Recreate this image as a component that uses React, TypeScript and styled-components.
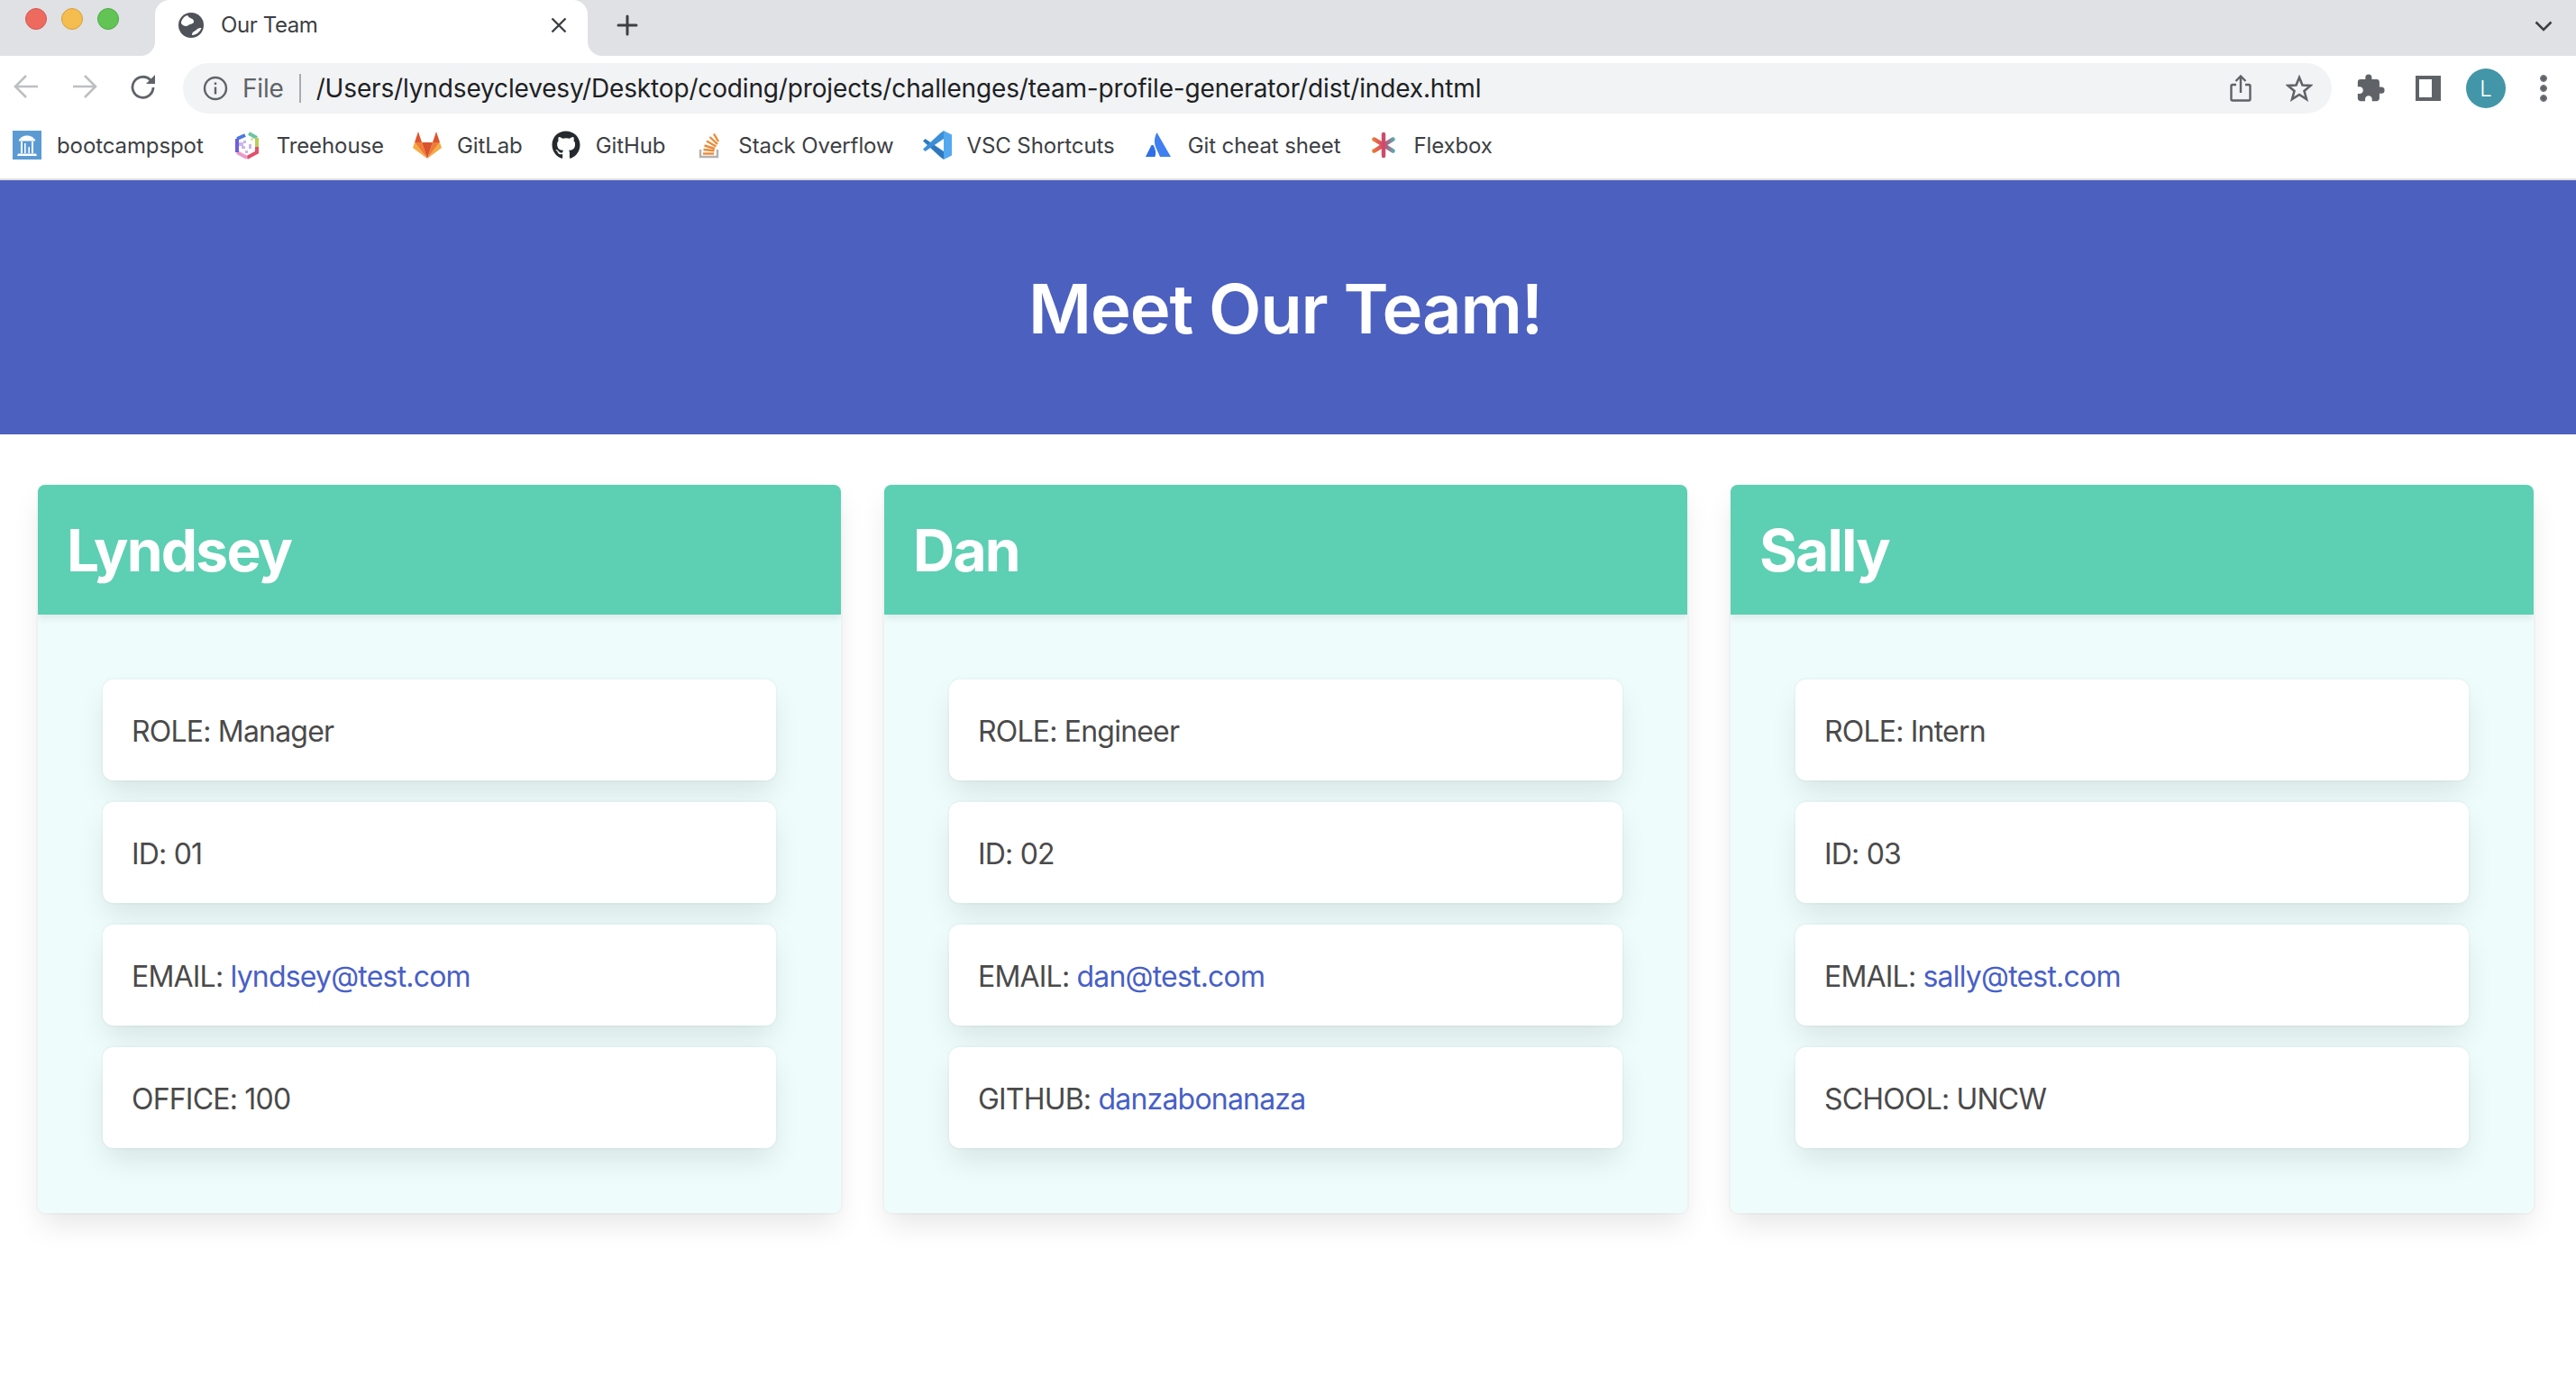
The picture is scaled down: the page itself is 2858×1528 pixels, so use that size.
import React from 'react'
import styled, { createGlobalStyle } from 'styled-components'
import { MdExtension } from 'react-icons/md'
import { FaGithub } from 'react-icons/fa'

const team = [
  {
    name: 'Lyndsey',
    rows: [
      { label: 'ROLE: Manager' },
      { label: 'ID: 01' },
      { label: 'EMAIL: ', link: 'lyndsey@test.com' },
      { label: 'OFFICE: 100' },
    ],
  },
  {
    name: 'Dan',
    rows: [
      { label: 'ROLE: Engineer' },
      { label: 'ID: 02' },
      { label: 'EMAIL: ', link: 'dan@test.com' },
      { label: 'GITHUB: ', link: 'danzabonanaza' },
    ],
  },
  {
    name: 'Sally',
    rows: [
      { label: 'ROLE: Intern' },
      { label: 'ID: 03' },
      { label: 'EMAIL: ', link: 'sally@test.com' },
      { label: 'SCHOOL: UNCW' },
    ],
  },
]

const BootcampIcon = () => (
  <svg width="32" height="32" viewBox="0 0 32 32">
    <rect width="32" height="32" fill="#5b9bd3" />
    <path d="M8 10 C9 4 23 4 24 10 Z" fill="#fff" />
    <path d="M7 9.5h18v2H7z" fill="#fff" />
    <path d="M9 12h2v13H9zM13 14h1.6v11H13zM17.4 18H19v7h-1.6zM21 12h2v13h-2z" fill="#fff" />
    <path d="M6 25.500h20l1 2.500H5z" fill="#fff" />
  </svg>
)

const TreehouseIcon = () => (
  <svg width="32" height="32" viewBox="0 0 32 32" fill="none" strokeWidth="4">
    <path d="M5 9 L14 5" stroke="#4d78e2" />
    <path d="M18 3 L27 8" stroke="#6cc5a2" />
    <path d="M27 8 V18" stroke="#b7cf55" />
    <path d="M27 18 V24 L16 30" stroke="#e2506c" />
    <path d="M16 30 L5 24" stroke="#ea9bcb" />
    <path d="M5 24 V9" stroke="#6a5fdc" />
    <path d="M7 13h5v4H7zM12 11h3v3h-3zM10 17h4v3h-4zM18 15h3v5h-3zM14 22h3v3h-3z" fill="#c9b5ee" stroke="none" />
    <path d="M20 8h3v3h-3z" fill="#d9e8a8" stroke="none" />
  </svg>
)

const GitLabIcon = () => (
  <svg width="32" height="32" viewBox="0 0 32 32">
    <path d="M6 1 L2 13 H10 Z" fill="#e0532c" />
    <path d="M26 1 L30 13 H22 Z" fill="#e0532c" />
    <path d="M2 13 H10 L16 31 Z" fill="#ef7c33" />
    <path d="M30 13 H22 L16 31 Z" fill="#ef7c33" />
    <path d="M10 13 H22 L16 31 Z" fill="#d9532e" />
    <path d="M2 13 L0 19 L16 31 Z" fill="#f5a942" />
    <path d="M30 13 L32 19 L16 31 Z" fill="#f5a942" />
  </svg>
)

const StackIcon = () => (
  <svg width="32" height="32" viewBox="0 0 32 32" fill="none" strokeWidth="2.400">
    <path d="M7 21 V29 H26 V21" stroke="#b3b1b0" />
    <g stroke="#ec8a34">
      <path d="M10 25.500 H22" />
      <path d="M10.500 21 L22.500 22.200" />
      <path d="M11.500 16.500 L23 20" />
      <path d="M14 11.500 L24.500 17.500" />
      <path d="M17.500 7 L26 15" />
      <path d="M22 3.500 L27 12" />
    </g>
  </svg>
)

const VscIcon = () => (
  <svg width="32" height="32" viewBox="0 0 32 32">
    <path d="M0 11.500 L2.500 9 L23 23 V32 L19 29 Z" fill="#2d79bf" />
    <path d="M23 0 V9 L2.500 23 L0 20.500 L19 3 Z" fill="#3b8fd8" />
    <path d="M23 0 L32 4.500 V27.500 L23 32 Z" fill="#52a9ef" />
  </svg>
)

const AtlassianIcon = () => (
  <svg width="32" height="32" viewBox="0 0 32 32">
    <path d="M14.500 2 C11.500 8 11 14 14 20 L18 29 H30 Z" fill="#3f7ff0" />
    <path d="M8.500 16 L2 29 H12.500 C14 25 13 20 10.500 16 Z" fill="#2f6fe8" />
  </svg>
)

const FlexboxIcon = () => (
  <svg width="32" height="32" viewBox="0 0 32 32" fill="none" strokeWidth="4.500" strokeLinecap="round">
    <defs>
      <linearGradient id="flexbox-mark" gradientUnits="userSpaceOnUse" x1="3" y1="0" x2="29" y2="0">
        <stop offset="0" stopColor="#f08030" />
        <stop offset="0.5" stopColor="#d2456c" />
        <stop offset="1" stopColor="#4fb5b8" />
      </linearGradient>
    </defs>
    <path d="M16 4 V28" stroke="url(#flexbox-mark)" />
    <path d="M5.500 9.500 L26.500 22.500" stroke="url(#flexbox-mark)" />
    <path d="M5.500 22.500 L26.500 9.500" stroke="url(#flexbox-mark)" />
  </svg>
)

const bookmarks = [
  { title: 'bootcampspot', Icon: BootcampIcon },
  { title: 'Treehouse', Icon: TreehouseIcon },
  { title: 'GitLab', Icon: GitLabIcon },
  { title: 'GitHub', Icon: () => <FaGithub size={32} color="#24292e" /> },
  { title: 'Stack Overflow', Icon: StackIcon },
  { title: 'VSC Shortcuts', Icon: VscIcon },
  { title: 'Git cheat sheet', Icon: AtlassianIcon },
  { title: 'Flexbox', Icon: FlexboxIcon },
]

export default function App() {
  return (
    <>
      <GlobalStyle />
      <TabStrip>
        <Lights>
          <Light $color="#ee6a5f" $edge="#d4574d" />
          <Light $color="#f5bd4f" $edge="#d69f3a" />
          <Light $color="#61c454" $edge="#4ea943" />
        </Lights>
        <Tab>
          <svg width="28" height="28" viewBox="0 0 28 28">
            <circle cx="14" cy="14" r="14" fill="#50525a" />
            <path d="M10 3 C12 7 17 6 17 10 C17 13 13 12 11 14 C9 16 5 15 3 12 C3 8 6 4 10 3 Z" fill="#fff" />
            <path d="M15 25 C15 21 18 21 20 19 C22 17 24 17 25.500 17 C24 21 20 25 15 25 Z" fill="#fff" />
          </svg>
          <TabTitle>Our Team</TabTitle>
          <svg width="18" height="18" viewBox="0 0 18 18" stroke="#3c4043" strokeWidth="2.400">
            <path d="M1.500 1.500 L16.500 16.500 M16.500 1.500 L1.500 16.500" />
          </svg>
        </Tab>
        <NewTab>
          <svg width="24" height="24" viewBox="0 0 24 24" stroke="#3c4043" strokeWidth="3" strokeLinecap="round">
            <path d="M12 2 V22 M2 12 H22" />
          </svg>
        </NewTab>
        <StripEnd>
          <svg width="20" height="12" viewBox="0 0 20 12" fill="none" stroke="#3c4043" strokeWidth="2.600">
            <path d="M1.500 1.500 L10 10 L18.500 1.500" />
          </svg>
        </StripEnd>
      </TabStrip>
      <Toolbar>
        <NavButton>
          <svg width="28" height="28" viewBox="0 0 28 28" fill="none" stroke="#bdbfc1" strokeWidth="2.600">
            <path d="M27 14 H2 M14 2 L2 14 L14 26" />
          </svg>
        </NavButton>
        <NavButton>
          <svg width="28" height="28" viewBox="0 0 28 28" fill="none" stroke="#bdbfc1" strokeWidth="2.600">
            <path d="M1 14 H26 M14 2 L26 14 L14 26" />
          </svg>
        </NavButton>
        <NavButton>
          <svg width="28" height="28" viewBox="0 0 28 28" fill="none">
            <path d="M22 7 A11.500 11.500 0 1 0 25 15" stroke="#5f6368" strokeWidth="2.800" />
            <path d="M27 1 V11 H17 Z" fill="#5f6368" />
          </svg>
        </NavButton>
        <Omnibox>
          <svg width="28" height="28" viewBox="0 0 28 28" fill="none" stroke="#5f6368" strokeWidth="2.400">
            <circle cx="14" cy="14" r="12" />
            <path d="M14 12.500 V20.500" />
            <path d="M14 7.500 V10" />
          </svg>
          <Scheme>File</Scheme>
          <Divider />
          <Url>/Users/lyndseyclevesy/Desktop/coding/projects/challenges/team-profile-generator/dist/index.html</Url>
          <svg width="24" height="30" viewBox="0 0 24 30" fill="none" stroke="#5f6368" strokeWidth="2.400">
            <path d="M7 11 H3 Q1.500 11 1.500 12.500 V27 Q1.500 28.500 3 28.500 H21 Q22.500 28.500 22.500 27 V12.500 Q22.500 11 21 11 H17" />
            <path d="M12 20 V2 M6.500 7 L12 1.500 L17.500 7" />
          </svg>
          <OmniStar>
            <svg width="30" height="30" viewBox="0 0 30 30" fill="none" stroke="#5f6368" strokeWidth="2.600">
              <path d="M15 3 L18.500 11.500 L27.500 12 L20.500 18 L23 27 L15 22 L7 27 L9.500 18 L2.500 12 L11.500 11.500 Z" />
            </svg>
          </OmniStar>
        </Omnibox>
        <ToolIcons>
          <MdExtension size={34} color="#5f6368" />
          <svg width="28" height="28" viewBox="0 0 28 28">
            <path fillRule="evenodd" d="M0 0 H28 V28 H0 Z M4 4 V24 H18 V4 Z" fill="#5f6368" />
          </svg>
          <Avatar>L</Avatar>
          <Dots>
            <Dot />
            <Dot />
            <Dot />
          </Dots>
        </ToolIcons>
      </Toolbar>
      <BookmarkBar>
        {bookmarks.map(({ title, Icon }) => (
          <Bookmark key={title}>
            <Icon />
            <span>{title}</span>
          </Bookmark>
        ))}
      </BookmarkBar>
      <Hero>
        <HeroTitle>Meet Our Team!</HeroTitle>
      </Hero>
      <Cards>
        {team.map((member) => (
          <Card key={member.name}>
            <CardHeader>
              <CardName>{member.name}</CardName>
            </CardHeader>
            <CardBody>
              {member.rows.map((row) => (
                <Row key={row.label}>
                  {row.label}
                  {row.link && <RowLink href="#">{row.link}</RowLink>}
                </Row>
              ))}
            </CardBody>
          </Card>
        ))}
      </Cards>
    </>
  )
}

const GlobalStyle = createGlobalStyle`
  html {
    background: #fff;
    overflow: hidden;
  }
  body {
    margin: 0;
    min-height: 1528px;
    font-family: Inter, "Liberation Sans", sans-serif;
    color: #4a4a4a;
  }
  * {
    box-sizing: border-box;
  }
`

const TabStrip = styled.div`
  display: flex;
  align-items: flex-end;
  height: 62px;
  background: #dfe1e5;
`

const Lights = styled.div`
  display: flex;
  gap: 16px;
  align-self: flex-start;
  width: 172px;
  padding: 9px 0 0 28px;
`

const Light = styled.span<{ $color: string; $edge: string }>`
  width: 24px;
  height: 24px;
  border-radius: 50%;
  background: ${(p) => p.$color};
  border: 1px solid ${(p) => p.$edge};
`

const Tab = styled.div`
  position: relative;
  display: flex;
  align-items: center;
  gap: 19px;
  width: 480px;
  height: 62px;
  padding: 0 23px 7px 26px;
  background: #fff;
  border-radius: 16px 16px 0 0;

  &::before,
  &::after {
    content: '';
    position: absolute;
    bottom: 0;
    width: 16px;
    height: 16px;
  }
  &::before {
    left: -16px;
    background: radial-gradient(circle at 0 0, #dfe1e5 15.5px, #fff 16.5px);
  }
  &::after {
    right: -16px;
    background: radial-gradient(circle at 100% 0, #dfe1e5 15.5px, #fff 16.5px);
  }
`

const TabTitle = styled.span`
  flex: 1;
  font-size: 24px;
  letter-spacing: -0.4px;
  color: #3c4043;
`

const NewTab = styled.div`
  display: flex;
  align-self: center;
  margin: 0 0 6px 32px;
`

const StripEnd = styled.div`
  display: flex;
  align-self: center;
  margin: 0 0 4px auto;
  padding: 0 26px 0 0;
`

const Toolbar = styled.div`
  display: flex;
  align-items: center;
  height: 68px;
  padding: 2px 0 2px 15px;
  background: #fff;
`

const NavButton = styled.div`
  display: flex;
  justify-content: center;
  width: 28px;
  margin-right: 37px;

  &:nth-child(3) {
    margin-right: 30px;
  }
`

const Omnibox = styled.div`
  display: flex;
  align-items: center;
  flex: none;
  width: 2384px;
  height: 56px;
  margin-top: 4px;
  padding: 0 21px 0 22px;
  border-radius: 28px;
  background: #f1f3f4;
`

const Scheme = styled.span`
  margin-left: 16px;
  font-size: 28px;
  letter-spacing: -0.2px;
  color: #5f6368;
`

const Divider = styled.span`
  width: 2px;
  height: 32px;
  margin: 0 17px;
  background: #a9abae;
`

const Url = styled.span`
  flex: 1;
  font-size: 28px;
  letter-spacing: -0.15px;
  color: #202124;
  white-space: nowrap;
`

const OmniStar = styled.span`
  display: flex;
  margin-left: 38px;
`

const ToolIcons = styled.div`
  display: grid;
  grid-auto-flow: column;
  grid-auto-columns: 64px;
  justify-items: center;
  align-items: center;
  margin: 4px 0 0 11px;
`

const Avatar = styled.div`
  display: flex;
  align-items: center;
  justify-content: center;
  width: 44px;
  height: 44px;
  border-radius: 50%;
  background: #4296a8;
  color: #fff;
  font-size: 24px;
  font-weight: 300;
`

const Dots = styled.div`
  display: flex;
  flex-direction: column;
  gap: 5px;
`

const Dot = styled.span`
  width: 6px;
  height: 6px;
  border-radius: 50%;
  background: #5f6368;
  outline: 0.5px solid #5f6368;
`

const BookmarkBar = styled.div`
  display: flex;
  align-items: center;
  gap: 32px;
  height: 70px;
  padding: 0 0 6px 14px;
  background: #fff;
  border-bottom: 2px solid #dedede;
`

const Bookmark = styled.div`
  display: flex;
  align-items: center;
  gap: 17px;
  font-size: 24px;
  letter-spacing: -0.1px;
  color: #3c4043;
  white-space: nowrap;
`

const Hero = styled.header`
  display: flex;
  align-items: center;
  justify-content: center;
  height: 282px;
  padding: 4px 6px 0 0;
  background: #4c60c0;
`

const HeroTitle = styled.h1`
  margin: 0;
  font-size: 76px;
  font-weight: 600;
  letter-spacing: -1.2px;
  line-height: 1.125;
  color: #fff;
`

const Cards = styled.main`
  display: grid;
  grid-template-columns: repeat(3, 891px);
  gap: 48px;
  padding: 56px 0 0 42px;
`

const Card = styled.section`
  border-radius: 8px;
  background: #eefdfc;
  box-shadow: 0 16px 32px -4px rgba(10, 10, 10, 0.1), 0 0 0 2px rgba(10, 10, 10, 0.02);
  overflow: hidden;
`

const CardHeader = styled.div`
  position: relative;
  height: 144px;
  display: flex;
  align-items: center;
  padding: 0 32px;
  background: #5dcfb3;
  box-shadow: 0 4px 8px rgba(10, 10, 10, 0.08);
`

const CardName = styled.h2`
  margin: 0;
  font-size: 64px;
  font-weight: 700;
  letter-spacing: -1.8px;
  color: #fff;
`

const CardBody = styled.div`
  display: flex;
  flex-direction: column;
  gap: 24px;
  padding: 72px;
`

const Row = styled.div`
  height: 112px;
  padding: 34px 32px 30px;
  border-radius: 12px;
  background: #fff;
  box-shadow: 0 16px 32px -4px rgba(10, 10, 10, 0.1), 0 0 0 2px rgba(10, 10, 10, 0.02);
  font-size: 32px;
  letter-spacing: -0.8px;
  line-height: 48px;
  color: #4a4a4a;
`

const RowLink = styled.a`
  color: #485fc7;
  text-decoration: none;
`
